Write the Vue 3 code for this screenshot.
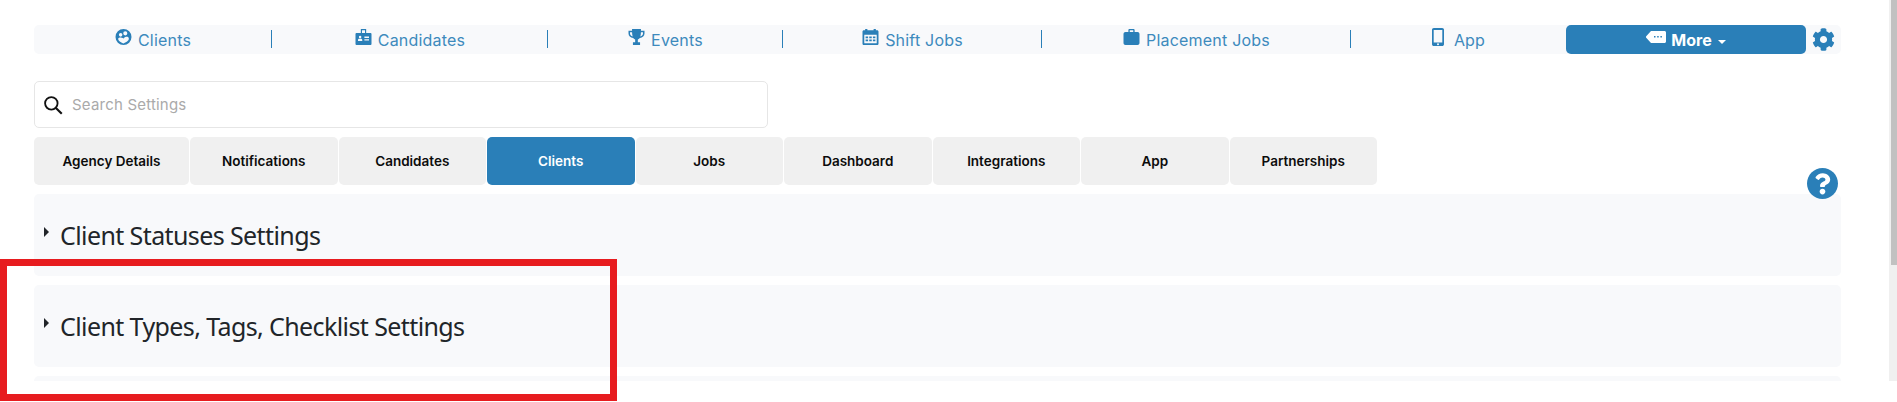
<script setup>
const navItems = [
  { label: 'Clients', icon: 'clients' },
  { label: 'Candidates', icon: 'badge' },
  { label: 'Events', icon: 'trophy' },
  { label: 'Shift Jobs', icon: 'calendar' },
  { label: 'Placement Jobs', icon: 'case' },
  { label: 'App', icon: 'phone' }
]

const tabs = [
  'Agency Details',
  'Notifications',
  'Candidates',
  'Clients',
  'Jobs',
  'Dashboard',
  'Integrations',
  'App',
  'Partnerships'
]

const panels = ['Client Statuses Settings', 'Client Types, Tags, Checklist Settings']
</script>

<template>
  <div class="page">
    <div class="viewport">
      <main class="content">
        <nav class="topnav">
          <a v-for="item in navItems" :key="item.label" class="nav-item">
            <svg v-if="item.icon === 'clients'" class="nav-icon" viewBox="0 0 18 18">
              <path fill="currentColor" fill-rule="evenodd" d="M9 0a9 9 0 1 1 0 18A9 9 0 0 1 9 0zM11 2.600a2.300 2.300 0 1 0 0 4.600 2.300 2.300 0 0 0 0-4.600zM5.800 4.600a2 2 0 1 0 0 4 2 2 0 0 0 0-4zM4.800 9.500c-1 0-1.800.8-1.800 1.800 0 1.800 2.800 4 5.800 5 3-1 6.200-3.200 6.200-5.300 0-1.600-1-2.200-2.200-2.200-1.200 0-2.400.5-3.700 1.800C8 9.800 6.200 9.500 4.800 9.500z" />
            </svg>
            <svg v-else-if="item.icon === 'badge'" class="nav-icon" viewBox="0 0 18 18">
              <path fill="currentColor" fill-rule="evenodd" d="M6 0h6v4.500h5c.6 0 1 .4 1 1V17c0 .6-.4 1-1 1H1c-.6 0-1-.4-1-1V5.500c0-.6.400-1 1-1h5zM7.300 1.300v3.200h3.400V1.300zM5.200 7.600a1.400 1.400 0 1 0 0 2.800 1.400 1.400 0 0 0 0-2.800zM2.800 13.500h4.800v-1c0-.9-.7-1.500-1.500-1.500H4.300c-.8 0-1.500.6-1.500 1.500zM10 8.500V10h5.200V8.500zm0 3V13h5.200v-1.500z" />
            </svg>
            <svg v-else-if="item.icon === 'trophy'" class="nav-icon" viewBox="0 0 18 18">
              <path fill="currentColor" fill-rule="evenodd" d="M4 0h10v2h4v3c0 2.700-2.200 4.800-5.200 5.200-.8 1-1.800 1.500-2.300 1.700V15H13v3H5v-3h2.500v-3.100c-.5-.2-1.500-.7-2.300-1.700C2.200 9.800 0 7.700 0 5V2h4zM1.700 3.700V5c0 1.500 1.100 2.900 3 3.400C4.300 7 4 5.500 4 3.700zm12.300 0c0 1.800-.3 3.300-.7 4.700 1.900-.5 3-1.900 3-3.400V3.700z" />
            </svg>
            <svg v-else-if="item.icon === 'calendar'" class="nav-icon" viewBox="0 0 18 18">
              <path fill="currentColor" fill-rule="evenodd" d="M3 0h2.500v1.500h7V0H15v1.500h1.500c.8 0 1.500.7 1.500 1.500v13.500c0 .8-.7 1.500-1.500 1.500h-15C.7 18 0 17.300 0 16.500V3c0-.8.700-1.500 1.500-1.500H3zM2 6.500V16h14V6.500zm1.500 2h2.800v2H3.500zm4.100 0h2.800v2H7.600zm4.100 0h2.800v2h-2.800zm-8.200 3.300h2.800v2H3.500zm4.100 0h2.800v2H7.600zm4.100 0h2.800v2h-2.800z" />
            </svg>
            <svg v-else-if="item.icon === 'case'" class="nav-icon" viewBox="0 0 18 18">
              <path fill="currentColor" fill-rule="evenodd" d="M5.500 3.500V1.200C5.500 .5 6 0 6.700 0h4.600c.7 0 1.200.5 1.200 1.200v2.300h3.300c1.200 0 2.200 1 2.200 2.200v10.100c0 1.200-1 2.200-2.200 2.200H2.200C1 18 0 17 0 15.800V5.700c0-1.200 1-2.200 2.200-2.200zM7 1.500v2h4v-2z" />
            </svg>
            <svg v-else class="nav-icon phone" viewBox="0 0 12 18">
              <path fill="currentColor" fill-rule="evenodd" d="M1.800 0h8.400C11.200 0 12 .8 12 1.800v14.400c0 1-.8 1.800-1.800 1.800H1.800C.8 18 0 17.200 0 16.200V1.800C0 .8.800 0 1.800 0zM1.700 2v12.500h8.600V2zM6 15.200a1 1 0 1 0 0 2 1 1 0 0 0 0-2z" />
            </svg>
            <span>{{ item.label }}</span>
          </a>
          <button class="more-btn">
            <svg class="more-icon" viewBox="0 0 20 12">
              <path fill="currentColor" fill-rule="evenodd" d="M5 0h13.500c.8 0 1.500.7 1.500 1.500v9c0 .8-.7 1.500-1.500 1.500H5L0 6.500v-1zM8 5v1.500h1.500V5zm3.200 0v1.500h1.500V5zm3.200 0v1.500h1.500V5z" />
            </svg>
            <span>More</span>
            <i class="caret"></i>
          </button>
          <div class="gear-cell">
            <svg class="gear" viewBox="0 0 512 512">
              <path fill="currentColor" d="M487.4 315.7l-42.6-24.6c4.3-23.2 4.3-47 0-70.2l42.6-24.6c4.9-2.8 7.1-8.6 5.5-14-11.100-35.600-30-67.800-54.700-94.600-3.800-4.100-10-5.100-14.800-2.300L380.800 110c-17.900-15.400-38.500-27.300-60.800-35.100V25.800c0-5.600-3.900-10.500-9.400-11.700-36.700-8.200-74.300-7.800-109.200 0-5.500 1.200-9.400 6.100-9.400 11.700V75c-22.200 7.900-42.800 19.800-60.800 35.100L88.700 85.500c-4.900-2.800-11-1.900-14.800 2.300-24.700 26.700-43.600 58.900-54.700 94.600-1.700 5.400.6 11.200 5.500 14L67.300 221c-4.300 23.200-4.300 47 0 70.200l-42.600 24.600c-4.900 2.800-7.100 8.600-5.500 14 11.100 35.600 30 67.800 54.700 94.600 3.800 4.100 10 5.100 14.800 2.300l42.600-24.600c17.900 15.400 38.500 27.300 60.800 35.100v49.200c0 5.600 3.900 10.500 9.400 11.700 36.700 8.200 74.300 7.800 109.200 0 5.500-1.200 9.400-6.100 9.400-11.700v-49.200c22.200-7.900 42.800-19.800 60.800-35.100l42.600 24.600c4.900 2.800 11 1.900 14.800-2.300 24.700-26.700 43.600-58.900 54.700-94.600 1.500-5.500-.7-11.300-5.600-14.100zM256 336c-44.100 0-80-35.900-80-80s35.900-80 80-80 80 35.900 80 80-35.900 80-80 80z" />
            </svg>
          </div>
        </nav>

        <label class="search">
          <svg class="search-icon" viewBox="0 0 24 24">
            <circle cx="10" cy="10" r="7.500" fill="none" stroke="#111" stroke-width="2.200" />
            <path d="M15.500 15.500l7 7" stroke="#111" stroke-width="2.600" />
          </svg>
          <input type="text" placeholder="Search Settings" />
        </label>

        <div class="tabs">
          <button v-for="tab in tabs" :key="tab" class="tab" :class="{ active: tab === 'Clients' }">{{ tab }}</button>
        </div>

        <section v-for="panel in panels" :key="panel" class="panel">
          <i class="arrow"></i>
          <h2>{{ panel }}</h2>
        </section>
        <section class="panel"></section>
      </main>

      <div class="scrollbar"><div class="thumb"></div></div>
    </div>

    <svg class="help" viewBox="8 8 496 496">
      <path fill="#2a7fb8" d="M504 256c0 136.997-111.043 248-248 248S8 392.997 8 256C8 119.083 119.043 8 256 8s248 111.083 248 248z" />
      <path fill="#fff" d="M262.655 90c-54.497 0-89.255 22.957-116.549 63.758-3.536 5.286-2.353 12.415 2.715 16.258l34.699 26.310c5.205 3.947 12.621 3.008 16.665-2.122 17.864-22.658 30.113-35.797 57.303-35.797 20.429 0 45.698 13.148 45.698 32.958 0 14.976-12.363 22.667-32.534 33.976C247.128 238.528 216 254.941 216 296v4c0 6.627 5.373 12 12 12h56c6.627 0 12-5.373 12-12v-1.333c0-28.462 83.186-29.647 83.186-106.667 0-58.002-60.165-102-116.531-102zM256 338c-25.365 0-46 20.635-46 46 0 25.364 20.635 46 46 46s46-20.636 46-46c0-25.365-20.635-46-46-46z" />
    </svg>

    <!-- marca vermelha da captura -->
    <div class="highlight"></div>
  </div>
</template>

<style scoped>
.page {
  position: relative;
  height: 402px;
  background: #fff;
  font-family: Inter, "Open Sans", sans-serif;
}

.viewport {
  display: flex;
  height: 381px;
  overflow: hidden;
}

.content {
  flex: 1;
  min-width: 0;
  padding: 25px 48px 0 34px;
}

.topnav {
  display: grid;
  grid-template-columns: 238px 276px 235px 259px 309px 215px 240px 35px;
  height: 29px;
  background: #f8f9fb;
  border-radius: 5px;
}

.nav-item {
  position: relative;
  display: flex;
  align-items: center;
  justify-content: center;
  gap: 6px;
  color: #3d8abd;
  font-size: 16px;
  letter-spacing: 0.2px;
}

.nav-item::after {
  content: "";
  position: absolute;
  right: 0;
  top: 5px;
  height: 18px;
  width: 1px;
  background: #2a7fb8;
}

.nav-item:nth-of-type(6)::after {
  display: none;
}

.nav-icon {
  width: 17px;
  height: 16px;
  margin-top: -5px;
  color: #2a7fb8;
}

.nav-icon.phone {
  width: 12px;
  height: 18px;
  margin-right: 4px;
}

.more-btn {
  display: flex;
  align-items: center;
  justify-content: center;
  gap: 5px;
  padding: 0;
  border: none;
  border-radius: 5px;
  background: #2a7fb8;
  color: #fff;
  font-family: inherit;
  font-size: 16px;
  font-weight: 700;
}

.more-icon {
  width: 20px;
  height: 12px;
  margin-top: -6px;
}

.caret {
  width: 0;
  height: 0;
  margin-left: 1px;
  margin-top: 4px;
  border-left: 4.500px solid transparent;
  border-right: 4.500px solid transparent;
  border-top: 4px solid #fff;
}

.gear-cell {
  display: flex;
  align-items: center;
  justify-content: center;
}

.gear {
  width: 23px;
  height: 23px;
  color: #2a7fb8;
}

.search {
  display: flex;
  align-items: center;
  gap: 9px;
  width: 734px;
  height: 47px;
  box-sizing: border-box;
  margin-top: 27px;
  padding-left: 8px;
  border: 1px solid #e6e6e6;
  border-radius: 5px;
}

.search-icon {
  width: 20px;
  height: 20px;
}

.search input {
  flex: 1;
  padding: 0;
  border: none;
  outline: none;
  background: none;
  font-family: inherit;
  font-size: 15px;
  letter-spacing: 0.2px;
}

.search input::placeholder {
  color: #aaa;
}

.tabs {
  display: flex;
  gap: 1px;
  margin-top: 9px;
}

.tab {
  width: 147.500px;
  height: 48px;
  padding: 0 0 1px;
  border: none;
  border-radius: 5px;
  background: #f0f0f0;
  color: #0c0c0c;
  font-family: inherit;
  font-size: 13.500px;
  font-weight: 600;
}

.tab:first-child {
  width: 155px;
}

.tab.active {
  background: #2a7fb8;
  color: #fff;
}

.panel {
  display: flex;
  align-items: center;
  gap: 11px;
  height: 82px;
  margin-top: 9px;
  padding-left: 10px;
  background: #f8f9fb;
  border-radius: 5px;
  box-sizing: border-box;
}

.arrow {
  width: 0;
  height: 0;
  margin-top: -7px;
  border-top: 5px solid transparent;
  border-bottom: 5px solid transparent;
  border-left: 5px solid #212529;
}

.panel h2 {
  margin: 0;
  font-family: "Noto Sans", sans-serif;
  font-size: 25px;
  font-weight: 400;
  letter-spacing: -0.6px;
  color: #212529;
}

.scrollbar {
  width: 8px;
  background: #f0f0f0;
}

.thumb {
  height: 265px;
  margin-left: 2px;
  background: #c1c1c1;
}

.help {
  position: absolute;
  left: 1807px;
  top: 168px;
  width: 31px;
  height: 31px;
}

.highlight {
  position: absolute;
  left: 0;
  top: 259px;
  width: 617px;
  height: 142px;
  border: 7px solid #e71c1f;
  box-sizing: border-box;
}
</style>

<style>
html, body {
  background: #fff;
}
</style>
